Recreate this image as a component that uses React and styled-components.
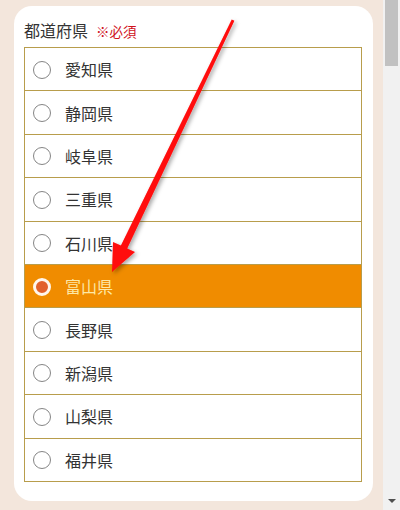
import React, { useState } from 'react';
import styled, { createGlobalStyle } from 'styled-components';

const GlobalStyle = createGlobalStyle`
  html, body {
    margin: 0;
    padding: 0;
    background: #f3e6dc;
  }
  body {
    font-family: "Noto Sans CJK JP", "Noto Sans", sans-serif;
    color: #333;
  }
`;

const prefectures = [
  '愛知県',
  '静岡県',
  '岐阜県',
  '三重県',
  '石川県',
  '富山県',
  '長野県',
  '新潟県',
  '山梨県',
  '福井県',
];

const Page = styled.div`
  position: relative;
  display: flex;
  height: 510px;
  overflow: hidden;
`;

const Main = styled.main`
  flex: 1;
  padding: 6px 10px 0 14px;
`;

const Card = styled.section`
  background: #fff;
  border-radius: 18px;
  padding: 12px 11px 19px 10px;
`;

const Title = styled.h2`
  margin: 0 0 4px;
  display: flex;
  align-items: baseline;
  gap: 8px;
  font-size: 16px;
  font-weight: 400;
  line-height: 24px;
  color: #333;
`;

const Required = styled.span`
  font-size: 13.5px;
  color: #d0121b;
`;

const List = styled.div`
  border: 1px solid #b89d4c;
`;

const Row = styled.label`
  display: flex;
  align-items: center;
  gap: 14px;
  height: 43.4px;
  box-sizing: border-box;
  padding-left: 8px;
  font-size: 16px;
  cursor: pointer;
  background: ${(p) => (p.$checked ? '#f08c00' : '#fff')};
  color: ${(p) => (p.$checked ? '#fde8a6' : '#333')};
  border-top: 1px solid #b89d4c;

  &:first-child {
    border-top: none;
    height: 42.4px;
  }
`;

const Radio = styled.span`
  width: 18px;
  height: 18px;
  box-sizing: border-box;
  border-radius: 50%;
  flex-shrink: 0;
  margin-top: 1px;
  border: ${(p) => (p.$checked ? '3.5px solid #fff6ec' : '1.5px solid #858585')};
  background: ${(p) => (p.$checked ? '#e2612c' : '#fff')};
`;

const HiddenInput = styled.input`
  display: none;
`;

const Scrollbar = styled.div`
  width: 17px;
  flex-shrink: 0;
  background: #f1f1f1;
  display: flex;
  flex-direction: column;
  align-items: center;
`;

const Thumb = styled.div`
  width: 13px;
  height: 66px;
  background: #c1c1c1;
`;

const DownArrow = styled.div`
  margin-top: auto;
  margin-bottom: 7px;
  width: 0;
  height: 0;
  border-left: 4px solid transparent;
  border-right: 4px solid transparent;
  border-top: 4px solid #505050;
`;

const Overlay = styled.svg`
  position: absolute;
  left: 0;
  top: 0;
  pointer-events: none;
`;

const Arrow = () => (
  <Overlay width="400" height="510" viewBox="0 0 400 510">
    <defs>
      <filter id="arrowShadow" x="-20%" y="-20%" width="140%" height="140%">
        <feDropShadow dx="2" dy="2" stdDeviation="2" floodColor="#000" floodOpacity="0.35" />
      </filter>
    </defs>
    <polygon
      filter="url(#arrowShadow)"
      fill="#ff0a0a"
      points="234.4,20.7 127.2,248.5 135,252 112,272 113,242 120.9,245.5 231.7,19.4"
    />
  </Overlay>
);

export default function App() {
  const [selected, setSelected] = useState('富山県');

  return (
    <>
      <GlobalStyle />
      <Page>
        <Main>
          <Card>
            <Title>
              都道府県<Required>※必須</Required>
            </Title>
            <List>
              {prefectures.map((name) => (
                <Row key={name} $checked={selected === name}>
                  <HiddenInput
                    type="radio"
                    name="pref"
                    value={name}
                    checked={selected === name}
                    onChange={() => setSelected(name)}
                  />
                  <Radio $checked={selected === name} />
                  {name}
                </Row>
              ))}
            </List>
          </Card>
        </Main>
        <Scrollbar>
          <Thumb />
          <DownArrow />
        </Scrollbar>
        <Arrow />
      </Page>
    </>
  );
}
